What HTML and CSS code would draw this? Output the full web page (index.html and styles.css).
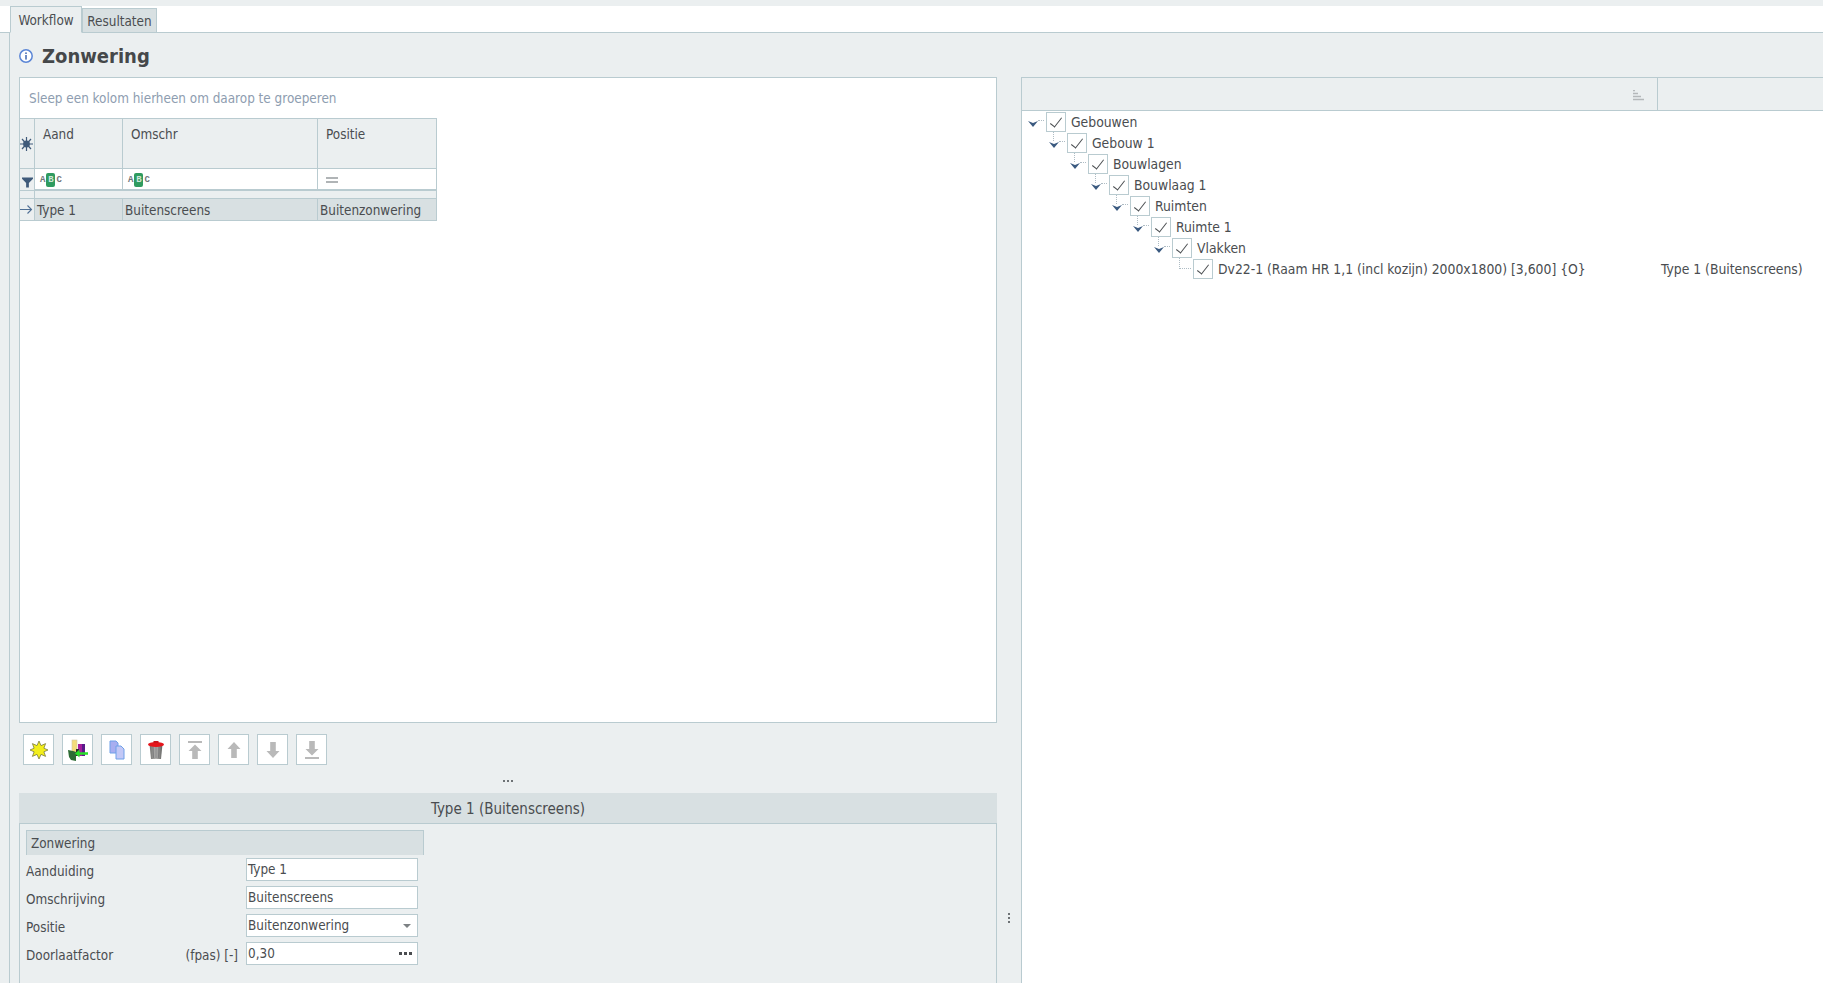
FILE: index.html
```html
<!DOCTYPE html>
<html lang="en">
<head>
  <meta charset="UTF-8" />
  <title>Zonwering</title>
  <link rel="stylesheet" href="styles.css">
</head>
<body>

  <div class="tabstrip">
    <div class="tab tab-active">Workflow</div>
    <div class="tab">Resultaten</div>
  </div>

  <div class="page">
    <div class="title-row">
      <svg class="info-icon" width="16" height="16" viewBox="0 0 16 16">
        <circle cx="8" cy="8" r="6.2" fill="#fff" stroke="#5b86d6" stroke-width="1.5"/>
        <rect x="7.2" y="7" width="1.6" height="4.6" fill="#4a6fb5"/>
        <rect x="7.2" y="4.4" width="1.6" height="1.6" fill="#4a6fb5"/>
      </svg>
      <h1>Zonwering</h1>
    </div>

    <div class="panes">
      <div class="left-pane">
        <div class="grid-box">
          <div class="group-panel">Sleep een kolom hierheen om daarop te groeperen</div>
          <div class="grid">
            <div class="cell ind head-ind">
              <svg width="13" height="14" viewBox="0 0 13 14"><path d="M6.500 0v14M0 7h13M2 2l9 10M11 2L2 12" stroke="#3f5a7a" stroke-width="1.200"/><circle cx="6.500" cy="7" r="3.400" fill="#3f5a7a"/></svg>
            </div>
            <div class="cell head">Aand</div>
            <div class="cell head">Omschr</div>
            <div class="cell head">Positie</div>

            <div class="cell ind filter-ind">
              <svg width="12" height="11" viewBox="0 0 12 11"><path d="M0 0h12v1.500L7.500 6v5h-3V6L0 1.500z" fill="#3f5a7a"/></svg>
            </div>
            <div class="cell filter"><span class="abc">A<b>B</b>C</span></div>
            <div class="cell filter"><span class="abc">A<b>B</b>C</span></div>
            <div class="cell filter"><span class="equal"></span></div>

            <div class="cell gap-ind"></div>
            <div class="gap-row"></div>

            <div class="cell ind row-ind">
              <svg width="13" height="11" viewBox="0 0 13 11"><path d="M0 5.500h11.500M7.500 1.500l4 4-4 4" fill="none" stroke="#4f6f94" stroke-width="1.100"/></svg>
            </div>
            <div class="cell sel">Type 1</div>
            <div class="cell sel">Buitenscreens</div>
            <div class="cell sel">Buitenzonwering</div>
          </div>
        </div>

        <div class="toolbar">
          <button class="tool">
            <svg width="20" height="20" viewBox="0 0 20 20"><path d="M10 1l2 4.600 4.600-2-1.700 4.600L19 10l-4.100 1.800 1.700 4.600-4.600-2L10 19l-2-4.600-4.600 2 1.700-4.600L1 10l4.100-1.800L3.400 3.600l4.600 2z" fill="#f2ee1c" stroke="#6b6b3a" stroke-width=".7"/></svg>
          </button>
          <button class="tool">
            <svg width="20" height="22" viewBox="0 0 20 22">
              <rect x="4" y="1" width="5" height="12" fill="#f3dc7a" stroke="#cfc6a6" stroke-width=".6"/>
              <rect x="10" y="5" width="4" height="12" fill="#a61d9c"/>
              <rect x="14" y="5" width="3" height="12" fill="#5a1a8a"/>
              <path d="M0 11l5 1 3 1v9l-5-1-2-3z" fill="#2d6b34"/>
              <rect x="8" y="10" width="3" height="7" fill="#2a2a2a"/>
              <path d="M7 14.500l4.500-4v2.700H20v2.600h-8.500v2.700z" fill="#27e027"/>
            </svg>
          </button>
          <button class="tool">
            <svg width="20" height="20" viewBox="0 0 20 20">
              <path d="M3 1h6l2 2v10H3z" fill="#a8aef0" stroke="#6ea0e8" stroke-width="1"/>
              <path d="M9 6h5l3 3v10H9z" fill="#c3c8f6" stroke="#6ea0e8" stroke-width="1"/>
            </svg>
          </button>
          <button class="tool">
            <svg width="20" height="20" viewBox="0 0 20 20">
              <defs>
                <linearGradient id="can" x1="0" x2="1" y1="0" y2="0">
                  <stop offset="0" stop-color="#6f6f6d"/>
                  <stop offset=".5" stop-color="#b5b5b3"/>
                  <stop offset="1" stop-color="#5f5f5d"/>
                </linearGradient>
              </defs>
              <path d="M3.500 4h13l-1.500 15H5z" fill="url(#can)"/>
              <path d="M7 7l.6 11M10 7v11M13 7l-.6 11" stroke="#77777a" stroke-width=".8"/>
              <ellipse cx="10" cy="4.500" rx="8" ry="2.400" fill="#e5151b"/>
              <rect x="7.500" y="1" width="5" height="2" fill="#c9141a"/>
            </svg>
          </button>
          <button class="tool">
            <svg width="20" height="20" viewBox="0 0 20 20"><path d="M3 1h14v2H3zM10 4.500l6.500 6.500h-3.700v8H7.200v-8H3.500z" fill="#b9b9b9"/></svg>
          </button>
          <button class="tool">
            <svg width="20" height="20" viewBox="0 0 20 20"><path d="M10 2l6.500 7h-3.700v9H7.200V9H3.500z" fill="#b9b9b9"/></svg>
          </button>
          <button class="tool">
            <svg width="20" height="20" viewBox="0 0 20 20"><path d="M10 18l6.500-7h-3.700V2H7.200v9H3.500z" fill="#b9b9b9"/></svg>
          </button>
          <button class="tool">
            <svg width="20" height="20" viewBox="0 0 20 20"><path d="M3 17h14v2H3zM10 15.500L16.500 9h-3.700V1H7.200v8H3.500z" fill="#b9b9b9"/></svg>
          </button>
        </div>

        <div class="h-grip"><i></i><i></i><i></i></div>

        <div class="detail-head">Type 1 (Buitenscreens)</div>
        <div class="detail-body">
          <div class="section-head">Zonwering</div>
          <div class="field">
            <label>Aanduiding</label>
            <div class="input">Type 1</div>
          </div>
          <div class="field">
            <label>Omschrijving</label>
            <div class="input">Buitenscreens</div>
          </div>
          <div class="field">
            <label>Positie</label>
            <div class="input">Buitenzonwering<span class="caret"></span></div>
          </div>
          <div class="field">
            <label>Doorlaatfactor</label>
            <span class="unit">(fpas) [-]</span>
            <div class="input">0,30<span class="more"><i></i><i></i><i></i></span></div>
          </div>
        </div>
      </div>

      <div class="v-grip"><i></i><i></i><i></i></div>

      <div class="right-pane">
        <div class="tree-head">
          <div class="tree-col">
            <svg width="11" height="11" viewBox="0 0 11 11"><path d="M0 .5h2M0 3.500h5M0 6.500h8M0 9.500h11" stroke="#b4b8ba" stroke-width="1.500"/></svg>
          </div>
        </div>
        <div class="tree">
          <div class="node lv0"><span class="arrow"></span><span class="check"></span><span class="node-text">Gebouwen</span></div>
          <div class="node lv1"><span class="arrow"><i class="stem"></i></span><span class="check"></span><span class="node-text">Gebouw 1</span></div>
          <div class="node lv2"><span class="arrow"><i class="stem"></i></span><span class="check"></span><span class="node-text">Bouwlagen</span></div>
          <div class="node lv3"><span class="arrow"><i class="stem"></i></span><span class="check"></span><span class="node-text">Bouwlaag 1</span></div>
          <div class="node lv4"><span class="arrow"><i class="stem"></i></span><span class="check"></span><span class="node-text">Ruimten</span></div>
          <div class="node lv5"><span class="arrow"><i class="stem"></i></span><span class="check"></span><span class="node-text">Ruimte 1</span></div>
          <div class="node lv6"><span class="arrow"><i class="stem"></i></span><span class="check"></span><span class="node-text">Vlakken</span></div>
          <div class="node lv7"><span class="leaf"></span><span class="check"></span><span class="node-text">Dv22-1 (Raam HR 1,1 (incl kozijn) 2000x1800) [3,600] {O}</span><span class="node-value">Type 1 (Buitenscreens)</span></div>
        </div>
      </div>
    </div>
  </div>

</body>
</html>
```

FILE: styles.css
```css
* {
  box-sizing: border-box;
}

html, body {
  height: 100%;
}

body {
  margin: 0;
  padding-top: 6px;
  overflow: hidden;
  display: flex;
  flex-direction: column;
  background: #ebeff0;
  color: #4a4d50;
  font-family: "DejaVu Sans Condensed", "DejaVu Sans", sans-serif;
  font-size: 13.4px;
}

/* tabs */
.tabstrip {
  height: 27px;
  flex: none;
  display: flex;
  align-items: flex-end;
  padding-left: 10px;
  background: #fff;
  border-bottom: 1px solid #b9cbd0;
}

.tab {
  width: 75px;
  height: 25px;
  margin-bottom: -1px;
  line-height: 25px;
  text-align: center;
  background: #d8e0e2;
  border: 1px solid #b9cbd0;
}

.tab-active {
  width: 72px;
  height: 27px;
  line-height: 28px;
  background: #ebeff0;
  border-bottom-color: #ebeff0;
}

/* page */
.page {
  flex: 1;
  min-height: 0;
  margin-left: 9px;
  border-left: 1px solid #b9cbd0;
  display: flex;
  flex-direction: column;
}

.title-row {
  height: 44px;
  flex: none;
  display: flex;
  align-items: center;
  padding: 2px 0 0 8px;
}

.info-icon {
  flex: none;
}

h1 {
  margin: 0 0 0 8px;
  font-size: 20px;
  font-weight: bold;
  color: #45484a;
}

.panes {
  flex: 1;
  min-height: 0;
  display: flex;
  padding-left: 9px;
}

.left-pane {
  width: 978px;
  flex: none;
  display: flex;
  flex-direction: column;
}

/* grid */
.grid-box {
  height: 646px;
  flex: none;
  background: #fff;
  border: 1px solid #b9cbd0;
}

.group-panel {
  height: 40px;
  line-height: 41px;
  padding-left: 9px;
  color: #8e9db0;
}

.grid {
  display: grid;
  width: 417px;
  grid-template-columns: 15px 88px 195px 119px;
  grid-template-rows: 50px 22px 8px 22px;
  border-top: 1px solid #b9cbd0;
}

.cell {
  border-right: 1px solid #b9cbd0;
  border-bottom: 1px solid #b9cbd0;
  white-space: nowrap;
  overflow: hidden;
}

.ind {
  display: flex;
  justify-content: center;
  align-items: center;
  padding-right: 1px;
  background: #ebeff0;
}

.head {
  background: #ebeff0;
  padding: 8px 8px;
}

.filter {
  background: #fff;
  display: flex;
  align-items: center;
  padding: 2px 0 0 5px;
  border-bottom-width: 2px;
}

.filter-ind svg {
  margin-top: 6px;
  margin-left: 2px;
}

.gap-ind {
  background: #ebeff0;
}

.gap-row {
  grid-column: 2 / 5;
  background: #ebeff0;
  border-right: 1px solid #b9cbd0;
  border-bottom: 1px solid #b9cbd0;
}

.sel {
  background: #d8e0e2;
  padding-left: 2px;
  line-height: 23px;
}

.abc {
  display: flex;
  align-items: center;
  font-size: 9px;
  font-weight: bold;
  font-family: "Liberation Mono", monospace;
  color: #6f7578;
  line-height: 14px;
}

.abc b {
  width: 9px;
  height: 14px;
  margin: 0 1px;
  border-radius: 2px;
  background: #2f9b5f;
  color: #cfe6d8;
  text-align: center;
}

.equal {
  width: 12px;
  height: 6px;
  margin-left: 3px;
  border-top: 2px solid #b0b4b6;
  border-bottom: 2px solid #b0b4b6;
}

/* toolbar */
.toolbar {
  display: flex;
  gap: 8px;
  flex: none;
  margin-top: 11px;
  padding-left: 4px;
}

.tool {
  width: 31px;
  height: 31px;
  padding: 0;
  display: flex;
  justify-content: center;
  align-items: center;
  background: #fff;
  border: 1px solid #b9cbd0;
}

.h-grip {
  height: 28px;
  flex: none;
  display: flex;
  justify-content: center;
  align-items: center;
  gap: 2px;
  padding-top: 4px;
}

.h-grip i,
.v-grip i {
  width: 2px;
  height: 2px;
  background: #6d7275;
}

/* detail panel */
.detail-head {
  height: 31px;
  flex: none;
  line-height: 32px;
  font-size: 15px;
  text-align: center;
  background: #d8e0e2;
  border-bottom: 1px solid #b9cbd0;
}

.detail-body {
  flex: 1;
  padding: 6px 6px 0;
  border-left: 1px solid #b9cbd0;
  border-right: 1px solid #b9cbd0;
}

.section-head {
  width: 398px;
  height: 25px;
  line-height: 26px;
  padding-left: 4px;
  background: #d8e0e2;
  border: 1px solid #b9cbd0;
  border-bottom: none;
}

.field {
  width: 392px;
  height: 23px;
  margin-top: 5px;
  display: flex;
  align-items: center;
}

.section-head + .field {
  margin-top: 3px;
}

.field label {
  flex: 1;
  padding-top: 4px;
}

.unit {
  margin-right: 8px;
  padding-top: 4px;
}

.input {
  width: 172px;
  height: 23px;
  flex: none;
  display: flex;
  align-items: center;
  justify-content: space-between;
  padding: 0 5px 0 1px;
  background: #fff;
  border: 1px solid #b9cbd0;
}

.caret {
  width: 0;
  height: 0;
  margin-right: 1px;
  border-left: 4px solid transparent;
  border-right: 4px solid transparent;
  border-top: 4px solid #7d8184;
}

.more {
  display: flex;
  gap: 2px;
}

.more i {
  width: 3px;
  height: 3px;
  background: #4a4d50;
}

.v-grip {
  width: 24px;
  flex: none;
  display: flex;
  flex-direction: column;
  justify-content: flex-end;
  align-items: center;
  gap: 2px;
  padding-bottom: 60px;
}

/* tree */
.right-pane {
  flex: 1;
  background: #fff;
  border-left: 1px solid #b9cbd0;
  border-top: 1px solid #b9cbd0;
}

.tree-head {
  height: 33px;
  background: #ebeff0;
  border-bottom: 1px solid #b9cbd0;
}

.tree-col {
  width: 636px;
  height: 100%;
  display: flex;
  justify-content: flex-end;
  align-items: center;
  padding-right: 13px;
  padding-top: 2px;
  border-right: 1px solid #b9cbd0;
}

.tree {
  font-size: 13.8px;
}

.node {
  height: 21px;
  display: flex;
  align-items: center;
  position: relative;
}

.lv0 { padding-left: 3px; }
.lv1 { padding-left: 24px; }
.lv2 { padding-left: 45px; }
.lv3 { padding-left: 66px; }
.lv4 { padding-left: 87px; }
.lv5 { padding-left: 108px; }
.lv6 { padding-left: 129px; }
.lv7 { padding-left: 150px; }

.arrow {
  width: 21px;
  height: 21px;
  flex: none;
  position: relative;
}

/* chevron */
.arrow::before {
  content: "";
  position: absolute;
  left: 3px;
  top: 10px;
  width: 10px;
  height: 6px;
  background: #3b5a80;
  clip-path: polygon(0 0, 50% 35%, 100% 0, 50% 100%);
}

/* dots towards the checkbox */
.arrow::after {
  content: "";
  position: absolute;
  left: 13px;
  top: 9px;
  width: 6px;
  border-top: 1px dotted #aebcc4;
}

.stem {
  position: absolute;
  left: 7px;
  top: 0;
  height: 9px;
  border-left: 1px dotted #aebcc4;
}

.leaf {
  width: 21px;
  height: 21px;
  flex: none;
  position: relative;
}

.leaf::before {
  content: "";
  position: absolute;
  left: 7px;
  top: 0;
  width: 11px;
  height: 10px;
  border-left: 1px dotted #aebcc4;
  border-bottom: 1px dotted #aebcc4;
}

.check {
  width: 20px;
  height: 20px;
  flex: none;
  border: 1.500px solid #b9cbd0;
  background: #fff;
  position: relative;
}

.check::after {
  content: "";
  position: absolute;
  left: 6px;
  top: 2px;
  width: 5px;
  height: 11px;
  border-right: 1.300px solid #4a4d50;
  border-bottom: 1.300px solid #4a4d50;
  transform: rotate(38deg);
}

.node-text {
  margin-left: 5px;
  white-space: nowrap;
}

.node-value {
  position: absolute;
  left: 639px;
  white-space: nowrap;
}
```
